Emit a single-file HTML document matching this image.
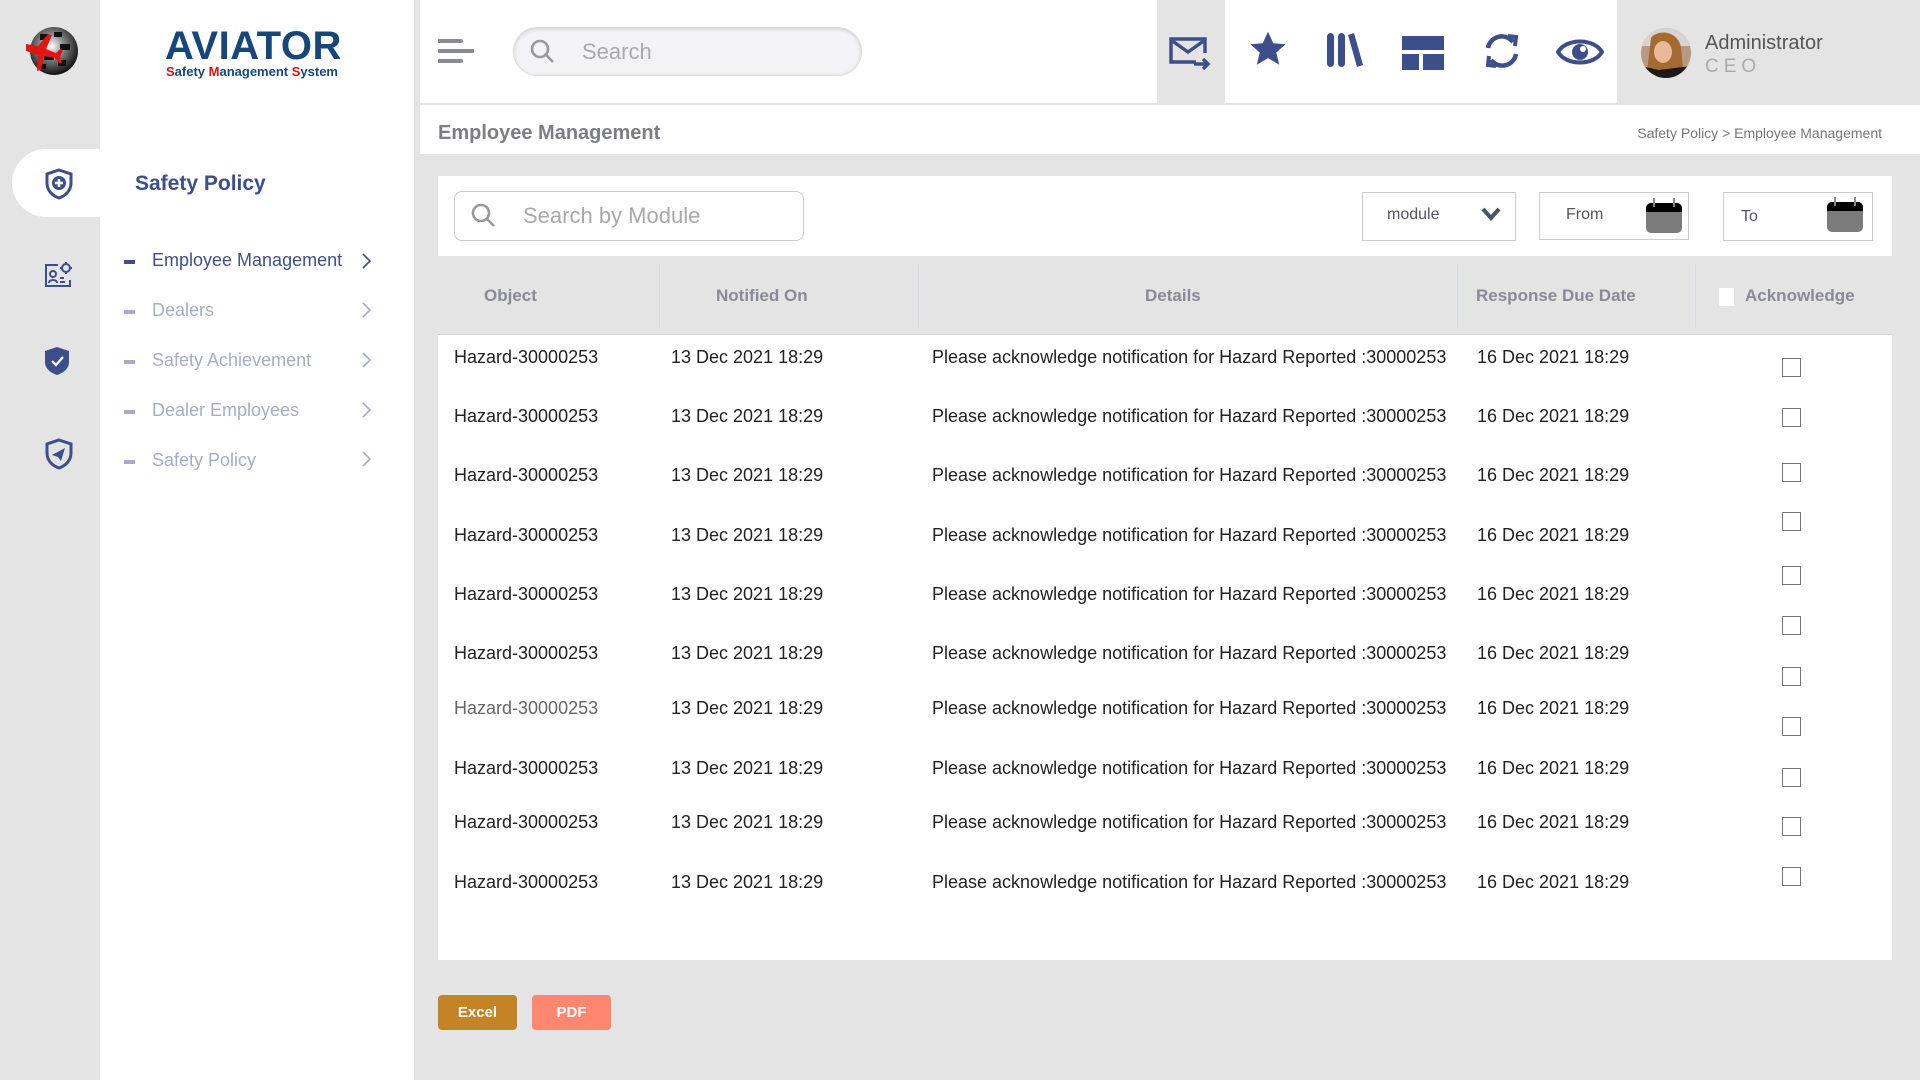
<!DOCTYPE html>
<html><head><meta charset="utf-8"><style>
*{margin:0;padding:0;box-sizing:border-box}
body{width:1920px;height:1080px;background:#e4e4e4;font-family:"Liberation Sans",sans-serif;position:relative;overflow:hidden}
.a{position:absolute}
.rail{left:0;top:0;width:100px;height:1080px;background:#e4e4e4}
.side{left:100px;top:0;width:314px;height:1080px;background:#fff}
.hdr{left:420px;top:0;width:1500px;height:103px;background:#fff}
.mi{font-size:18px;color:#a6acc9}
.mi .d{position:absolute;left:-28px;top:10px;width:11px;height:4px;background:#a6acc9}
.th{font-size:17px;font-weight:bold;color:#8a8a96;top:286px}
.td{font-size:18px;color:#222}
.cb{width:19px;height:19px;border:1.5px solid #777;background:#fff}
</style></head><body>
<div class="a rail"></div>
<div class="a side"></div>
<svg class="a" style="left:24px;top:22px" width="56" height="56" viewBox="0 0 56 56">
<defs><radialGradient id="g" cx="45%" cy="40%" r="60%"><stop offset="0" stop-color="#fff"/><stop offset=".5" stop-color="#777"/><stop offset="1" stop-color="#111"/></radialGradient></defs>
<circle cx="30" cy="29" r="24" fill="url(#g)"/>
<path d="M16 12h8v6h-8zM30 10h8v5h-8zM36 22h10v6h-10zM20 32h10v6h-10zM34 38h8v6h-8zM14 42h8v5h-8z" fill="#111"/>
<path d="M2 22l12 2 10-12 4 1-6 14 10 4 4-4 3 1-3 7 2 6-3 0-4-5-11-2-3 14-4 1 1-16-12-4z" fill="#e21515"/>
</svg>
<div class="a" style="left:165px;top:24px;font-size:40px;font-weight:bold;color:#17477a;letter-spacing:0.5px">AVIATOR</div>
<div class="a" style="left:166px;top:64px;font-size:13px;font-weight:bold;color:#17477a;white-space:nowrap"><span style="color:#d11">S</span>afety <span style="color:#d11">M</span>anagement <span style="color:#d11">S</span>ystem</div>
<div class="a" style="left:12px;top:149px;width:90px;height:68px;background:#fff;border-radius:34px 0 0 34px"></div>
<svg class="a" style="left:44px;top:168px" width="30" height="32" viewBox="0 0 30 32"><path d="M15 2L27 6v9c0 8-6 13-12 15C9 28 3 23 3 15V6z" fill="none" stroke="#3d4f8a" stroke-width="3"/><circle cx="15" cy="15" r="7" fill="#3d4f8a"/><path d="M15 11v8M11 15h8" stroke="#fff" stroke-width="2.5"/></svg>
<svg class="a" style="left:44px;top:260px" width="28" height="28" viewBox="0 0 28 28" fill="none" stroke="#3d4f8a" stroke-width="2"><path d="M14 5H2v21h24v-6"/><circle cx="9" cy="14" r="3"/><path d="M5 23c0-4 8-4 8 0M16 18h4M16 22h5"/><circle cx="22" cy="8" r="4"/><path d="M22 2v2M22 12v2M16 8h2M26 8h2"/></svg>
<svg class="a" style="left:44px;top:346px" width="26" height="30" viewBox="0 0 26 30"><path d="M13 1L25 5v11c0 7-6 11-12 13C7 27 1 23 1 16V5z" fill="#3d4f8a"/><path d="M8 15l4 4 7-8" stroke="#fff" stroke-width="2.2" fill="none"/></svg>
<svg class="a" style="left:44px;top:438px" width="30" height="32" viewBox="0 0 30 32"><path d="M15 2L27 6v9c0 8-6 13-12 15C9 28 3 23 3 15V6z" fill="none" stroke="#3d4f8a" stroke-width="3"/><path d="M8 17l13-7-4 13-3-4z" fill="#3d4f8a"/></svg>
<div class="a" style="left:135px;top:172px;font-size:21px;font-weight:bold;color:#3d4f8a">Safety Policy</div>
<div class="a mi" style="left:152px;top:250px;color:#3f4f8c"><span class="d" style="background:#3f4f8c"></span>Employee Management</div>
<div class="a mi" style="left:152px;top:300px"><span class="d"></span>Dealers</div>
<div class="a mi" style="left:152px;top:350px"><span class="d"></span>Safety Achievement</div>
<div class="a mi" style="left:152px;top:400px"><span class="d"></span>Dealer Employees</div>
<div class="a mi" style="left:152px;top:450px"><span class="d"></span>Safety Policy</div>
<svg class="a" style="left:361px;top:252px" width="12" height="230" viewBox="0 0 12 230" fill="none" stroke-width="1.6"><path d="M2 2l7 7-7 7" stroke="#3f4f8c"/><path d="M2 51l7 7-7 7M2 101l7 7-7 7M2 151l7 7-7 7M2 200l7 7-7 7" stroke="#a6acc9"/></svg>
<div class="a hdr"></div>
<svg class="a" style="left:438px;top:38px" width="36" height="26"><path d="M1 3h22M1 13h34M1 23h22" stroke="#8a8a94" stroke-width="4" stroke-linecap="round"/></svg>
<div class="a" style="left:513px;top:27px;width:349px;height:49px;border-radius:25px;background:#f3f3f7;border:1px solid #ddd;box-shadow:inset 0 1px 3px #ccc"></div>
<svg class="a" style="left:529px;top:38px" width="28" height="28" fill="none" stroke="#999" stroke-width="2.6"><circle cx="11" cy="11" r="8"/><path d="M17 17l7 7"/></svg>
<div class="a" style="left:582px;top:39px;font-size:22px;color:#a8a8b0">Search</div>
<div class="a" style="left:1157px;top:0;width:68px;height:103px;background:#e4e4e4"></div>
<div class="a" style="left:1617px;top:0;width:303px;height:103px;background:#e4e4e4"></div>
<svg class="a" style="left:1168px;top:36px" width="44" height="34" viewBox="0 0 44 34" fill="none" stroke="#3d4f8a" stroke-width="3.5"><path d="M28 26H3V3h34v14"/><path d="M3 4l17 12 17-12"/><path d="M26 28h14M35 23l5 5-5 5"/></svg>
<svg class="a" style="left:1248px;top:30px" width="40" height="38" viewBox="0 0 24 23"><path d="M12 1l3.2 7 7.5.6-5.7 5 1.8 7.4L12 17l-6.8 4 1.8-7.4-5.7-5 7.5-.6z" fill="#3d4f8a"/></svg>
<svg class="a" style="left:1325px;top:32px" width="40" height="36" viewBox="0 0 40 36" fill="#3d4f8a"><rect x="2" y="1" width="7" height="34" rx="3.5"/><rect x="13" y="1" width="7" height="34" rx="3.5"/><path d="M23 3l6-2 9 32-6 2z"/></svg>
<svg class="a" style="left:1402px;top:36px" width="42" height="34" fill="#3d4f8a"><rect x="0" y="0" width="42" height="14"/><rect x="0" y="18" width="17" height="16"/><rect x="21" y="18" width="21" height="16"/></svg>
<svg class="a" style="left:1482px;top:32px" width="40" height="38" viewBox="0 0 40 38" fill="none" stroke="#3d4f8a" stroke-width="4.5"><path d="M6 16A14 14 0 0 1 31 10"/><path d="M34 22A14 14 0 0 1 9 28"/><path d="M26 4l8 1-1 9" stroke-width="4"/><path d="M14 34l-8-1 1-9" stroke-width="4"/></svg>
<svg class="a" style="left:1556px;top:34px" width="48" height="36" viewBox="0 0 48 36"><path d="M2 18C10 4 38 4 46 18 38 32 10 32 2 18z" fill="none" stroke="#3d4f8a" stroke-width="4"/><circle cx="24" cy="18" r="8" fill="#3d4f8a"/><circle cx="27" cy="15" r="3" fill="#fff"/></svg>
<svg class="a" style="left:1641px;top:28px" width="50" height="50"><defs><clipPath id="c"><circle cx="25" cy="25" r="25"/></clipPath></defs><g clip-path="url(#c)"><rect width="50" height="50" fill="#b89a80"/><rect y="0" width="50" height="18" fill="#d8d2d0"/><path d="M10 10c8-10 28-6 30 10l2 20-20 12-16-8z" fill="#a46a30"/><ellipse cx="22" cy="24" rx="9" ry="11" fill="#e8b898"/><path d="M0 38l18 4 32-4v12H0z" fill="#1c1a18"/></g></svg>
<div class="a" style="left:1705px;top:32px;font-size:20px;color:#555">Administrator</div>
<div class="a" style="left:1705px;top:56px;font-size:19px;color:#aaa;letter-spacing:5px">CEO</div>
<div class="a" style="left:420px;top:105px;width:1500px;height:49px;background:#fff"></div>
<div class="a" style="left:438px;top:122px;font-size:20px;font-weight:bold;color:#7d7d88">Employee Management</div>
<div class="a" style="right:38px;top:125px;font-size:14px;color:#777">Safety Policy &gt; Employee Management</div>
<div class="a" style="left:438px;top:176px;width:1454px;height:784px;background:#fff"></div>
<div class="a" style="left:454px;top:191px;width:350px;height:50px;border:1px solid #ccc;border-radius:8px"></div>
<svg class="a" style="left:470px;top:202px" width="28" height="28" fill="none" stroke="#999" stroke-width="2.6"><circle cx="11" cy="11" r="8"/><path d="M17 17l7 7"/></svg>
<div class="a" style="left:523px;top:203px;font-size:22px;color:#a8a8b0">Search by Module</div>
<div class="a" style="left:1362px;top:192px;width:154px;height:49px;border:1px solid #ccc"></div>
<div class="a" style="left:1387px;top:206px;font-size:16px;color:#556">module</div>
<svg class="a" style="left:1481px;top:206px" width="20" height="16"><path d="M2 3l8 9 8-9" fill="none" stroke="#4a5560" stroke-width="4"/></svg>
<div class="a" style="left:1539px;top:192px;width:150px;height:48px;border:1px solid #ccc"></div>
<div class="a" style="left:1566px;top:206px;font-size:16px;color:#556">From</div>
<div class="a" style="left:1723px;top:192px;width:150px;height:49px;border:1px solid #ccc"></div>
<div class="a" style="left:1741px;top:208px;font-size:16px;color:#556">To</div>
<svg class="a" style="left:1646px;top:197px" width="36" height="36"><rect x="0" y="6" width="36" height="30" rx="5" fill="#7b7b7b"/><path d="M5 6h26a5 5 0 0 1 5 5v4H0v-4a5 5 0 0 1 5-5z" fill="#000"/><path d="M8 1v9M28 1v9" stroke="#888" stroke-width="2"/></svg>
<svg class="a" style="left:1827px;top:196px" width="36" height="36"><rect x="0" y="6" width="36" height="30" rx="5" fill="#7b7b7b"/><path d="M5 6h26a5 5 0 0 1 5 5v4H0v-4a5 5 0 0 1 5-5z" fill="#000"/><path d="M8 1v9M28 1v9" stroke="#888" stroke-width="2"/></svg>
<div class="a" style="left:438px;top:256px;width:1454px;height:79px;background:#e4e4e4;border-bottom:1px solid #d4d4d4"></div>
<div class="a" style="left:659px;top:264px;width:1px;height:64px;background:#d2dde2"></div>
<div class="a" style="left:918px;top:264px;width:1px;height:64px;background:#d2dde2"></div>
<div class="a" style="left:1457px;top:264px;width:1px;height:64px;background:#d2dde2"></div>
<div class="a" style="left:1695px;top:264px;width:1px;height:64px;background:#d2dde2"></div>
<div class="a th" style="left:484px">Object</div>
<div class="a th" style="left:716px">Notified On</div>
<div class="a th" style="left:1145px">Details</div>
<div class="a th" style="left:1476px">Response Due Date</div>
<div class="a" style="left:1719px;top:288px;width:15px;height:18px;background:#fff"></div>
<div class="a th" style="left:1745px">Acknowledge</div>
<div class="a td" style="left:454px;top:347px">Hazard-30000253</div><div class="a td" style="left:671px;top:347px">13 Dec 2021 18:29</div><div class="a td" style="left:932px;top:347px">Please acknowledge notification for Hazard Reported :30000253</div><div class="a td" style="left:1477px;top:347px">16 Dec 2021 18:29</div>
<div class="a td" style="left:454px;top:406px">Hazard-30000253</div><div class="a td" style="left:671px;top:406px">13 Dec 2021 18:29</div><div class="a td" style="left:932px;top:406px">Please acknowledge notification for Hazard Reported :30000253</div><div class="a td" style="left:1477px;top:406px">16 Dec 2021 18:29</div>
<div class="a td" style="left:454px;top:465px">Hazard-30000253</div><div class="a td" style="left:671px;top:465px">13 Dec 2021 18:29</div><div class="a td" style="left:932px;top:465px">Please acknowledge notification for Hazard Reported :30000253</div><div class="a td" style="left:1477px;top:465px">16 Dec 2021 18:29</div>
<div class="a td" style="left:454px;top:525px">Hazard-30000253</div><div class="a td" style="left:671px;top:525px">13 Dec 2021 18:29</div><div class="a td" style="left:932px;top:525px">Please acknowledge notification for Hazard Reported :30000253</div><div class="a td" style="left:1477px;top:525px">16 Dec 2021 18:29</div>
<div class="a td" style="left:454px;top:584px">Hazard-30000253</div><div class="a td" style="left:671px;top:584px">13 Dec 2021 18:29</div><div class="a td" style="left:932px;top:584px">Please acknowledge notification for Hazard Reported :30000253</div><div class="a td" style="left:1477px;top:584px">16 Dec 2021 18:29</div>
<div class="a td" style="left:454px;top:643px">Hazard-30000253</div><div class="a td" style="left:671px;top:643px">13 Dec 2021 18:29</div><div class="a td" style="left:932px;top:643px">Please acknowledge notification for Hazard Reported :30000253</div><div class="a td" style="left:1477px;top:643px">16 Dec 2021 18:29</div>
<div class="a td" style="left:454px;top:698px;color:#666">Hazard-30000253</div><div class="a td" style="left:671px;top:698px">13 Dec 2021 18:29</div><div class="a td" style="left:932px;top:698px">Please acknowledge notification for Hazard Reported :30000253</div><div class="a td" style="left:1477px;top:698px">16 Dec 2021 18:29</div>
<div class="a td" style="left:454px;top:758px">Hazard-30000253</div><div class="a td" style="left:671px;top:758px">13 Dec 2021 18:29</div><div class="a td" style="left:932px;top:758px">Please acknowledge notification for Hazard Reported :30000253</div><div class="a td" style="left:1477px;top:758px">16 Dec 2021 18:29</div>
<div class="a td" style="left:454px;top:812px">Hazard-30000253</div><div class="a td" style="left:671px;top:812px">13 Dec 2021 18:29</div><div class="a td" style="left:932px;top:812px">Please acknowledge notification for Hazard Reported :30000253</div><div class="a td" style="left:1477px;top:812px">16 Dec 2021 18:29</div>
<div class="a td" style="left:454px;top:872px">Hazard-30000253</div><div class="a td" style="left:671px;top:872px">13 Dec 2021 18:29</div><div class="a td" style="left:932px;top:872px">Please acknowledge notification for Hazard Reported :30000253</div><div class="a td" style="left:1477px;top:872px">16 Dec 2021 18:29</div>
<div class="a cb" style="left:1782px;top:358px"></div>
<div class="a cb" style="left:1782px;top:408px"></div>
<div class="a cb" style="left:1782px;top:463px"></div>
<div class="a cb" style="left:1782px;top:512px"></div>
<div class="a cb" style="left:1782px;top:566px"></div>
<div class="a cb" style="left:1782px;top:616px"></div>
<div class="a cb" style="left:1782px;top:667px"></div>
<div class="a cb" style="left:1782px;top:717px"></div>
<div class="a cb" style="left:1782px;top:768px"></div>
<div class="a cb" style="left:1782px;top:817px"></div>
<div class="a cb" style="left:1782px;top:867px"></div>
<div class="a" style="left:438px;top:995px;width:79px;height:35px;background:#c48426;border-radius:4px;color:#fff;font-weight:bold;font-size:15px;text-align:center;line-height:35px">Excel</div>
<div class="a" style="left:532px;top:995px;width:79px;height:35px;background:#ff8770;border-radius:4px;color:#fff;font-weight:bold;font-size:15px;text-align:center;line-height:35px">PDF</div>
</body></html>
